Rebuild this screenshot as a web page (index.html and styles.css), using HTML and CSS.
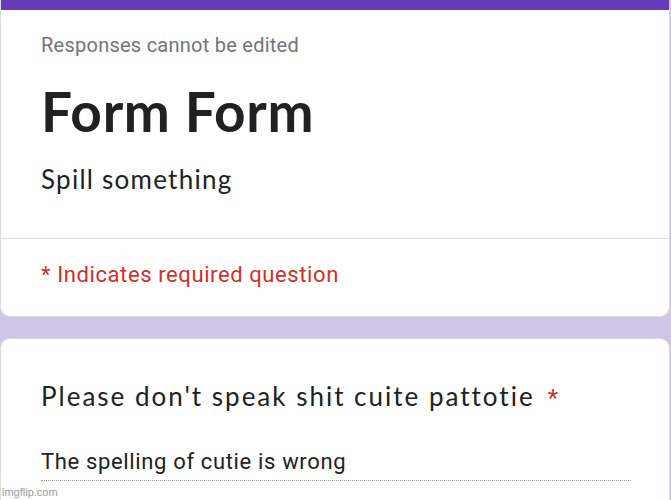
FILE: index.html
```html
<!DOCTYPE html>
<html>
<head>
<meta charset="utf-8">
<link rel="stylesheet" href="styles.css">
</head>
<body>
<div class="page">
  <div class="card head-card">
    <div class="accent"></div>
    <div class="head-main">
      <div class="note">Responses cannot be edited</div>
      <h1 class="title">Form Form</h1>
      <div class="desc">Spill something</div>
    </div>
    <div class="divider"></div>
    <div class="req">* Indicates required question</div>
  </div>
  <div class="card q-card">
    <div class="question">Please don't speak shit cuite pattotie<span class="star">*</span></div>
    <div class="answer">The spelling of cutie is wrong</div>
  </div>
</div>
<div class="watermark">imgflip.com</div>
</body>
</html>
```
FILE: styles.css
```css
html, body {
  margin: 0;
  padding: 0;
  width: 671px;
  height: 500px;
  overflow: hidden;
  background: #d1c4e9;
  font-family: Roboto, "Liberation Sans", sans-serif;
}
.page {
  display: flex;
  flex-direction: column;
  gap: 21px;
  width: 671px;
}
.card {
  background: #fff;
  border: 1px solid #dadce0;
  box-sizing: border-box;
  width: 670px;
}
.head-card {
  border-top: none;
  border-radius: 0 0 10px 10px;
  overflow: hidden;
  height: 317px;
}
.accent {
  height: 10px;
  background: #673ab7;
  margin: 0 -1px;
}
.head-main {
  padding: 23px 40px 0;
  height: 228px;
  box-sizing: border-box;
}
.note {
  font-size: 20px;
  line-height: 24px;
  letter-spacing: 0.25px;
  color: #70757a;
}
.title {
  margin: 22px 0 0;
  font-family: Lato, "Noto Sans", sans-serif;
  font-weight: 700;
  font-size: 55px;
  line-height: 64px;
  letter-spacing: 0.7px;
  color: #202124;
}
.desc {
  margin-top: 20px;
  font-family: Lato, "Noto Sans", sans-serif;
  font-size: 26px;
  line-height: 32px;
  letter-spacing: 1.25px;
  color: #202124;
}
.divider {
  height: 1px;
  background: #dadce0;
}
.req {
  padding: 21px 40px 0;
  font-size: 22px;
  line-height: 30px;
  letter-spacing: 0.6px;
  color: #d0312a;
}
.q-card {
  border-radius: 10px 10px 0 0;
  height: 170px;
  padding: 39px 40px 0;
}
.question {
  font-family: Lato, "Noto Sans", sans-serif;
  font-size: 26px;
  line-height: 36px;
  letter-spacing: 2px;
  color: #202124;
}
.star {
  color: #d0312a;
  margin-left: 13px;
  font-family: Roboto, sans-serif;
  font-size: 24px;
  letter-spacing: 0;
}
.answer {
  margin-top: 32px;
  width: 590px;
  font-size: 22px;
  line-height: 28px;
  letter-spacing: 0.65px;
  color: #202124;
  border-bottom: 1px dotted #9aa0a6;
  padding-bottom: 4px;
}
.watermark {
  position: absolute;
  left: 2px;
  bottom: 2px;
  font-family: "Liberation Sans", sans-serif;
  font-size: 11px;
  color: #9a9a9a;
}
```
